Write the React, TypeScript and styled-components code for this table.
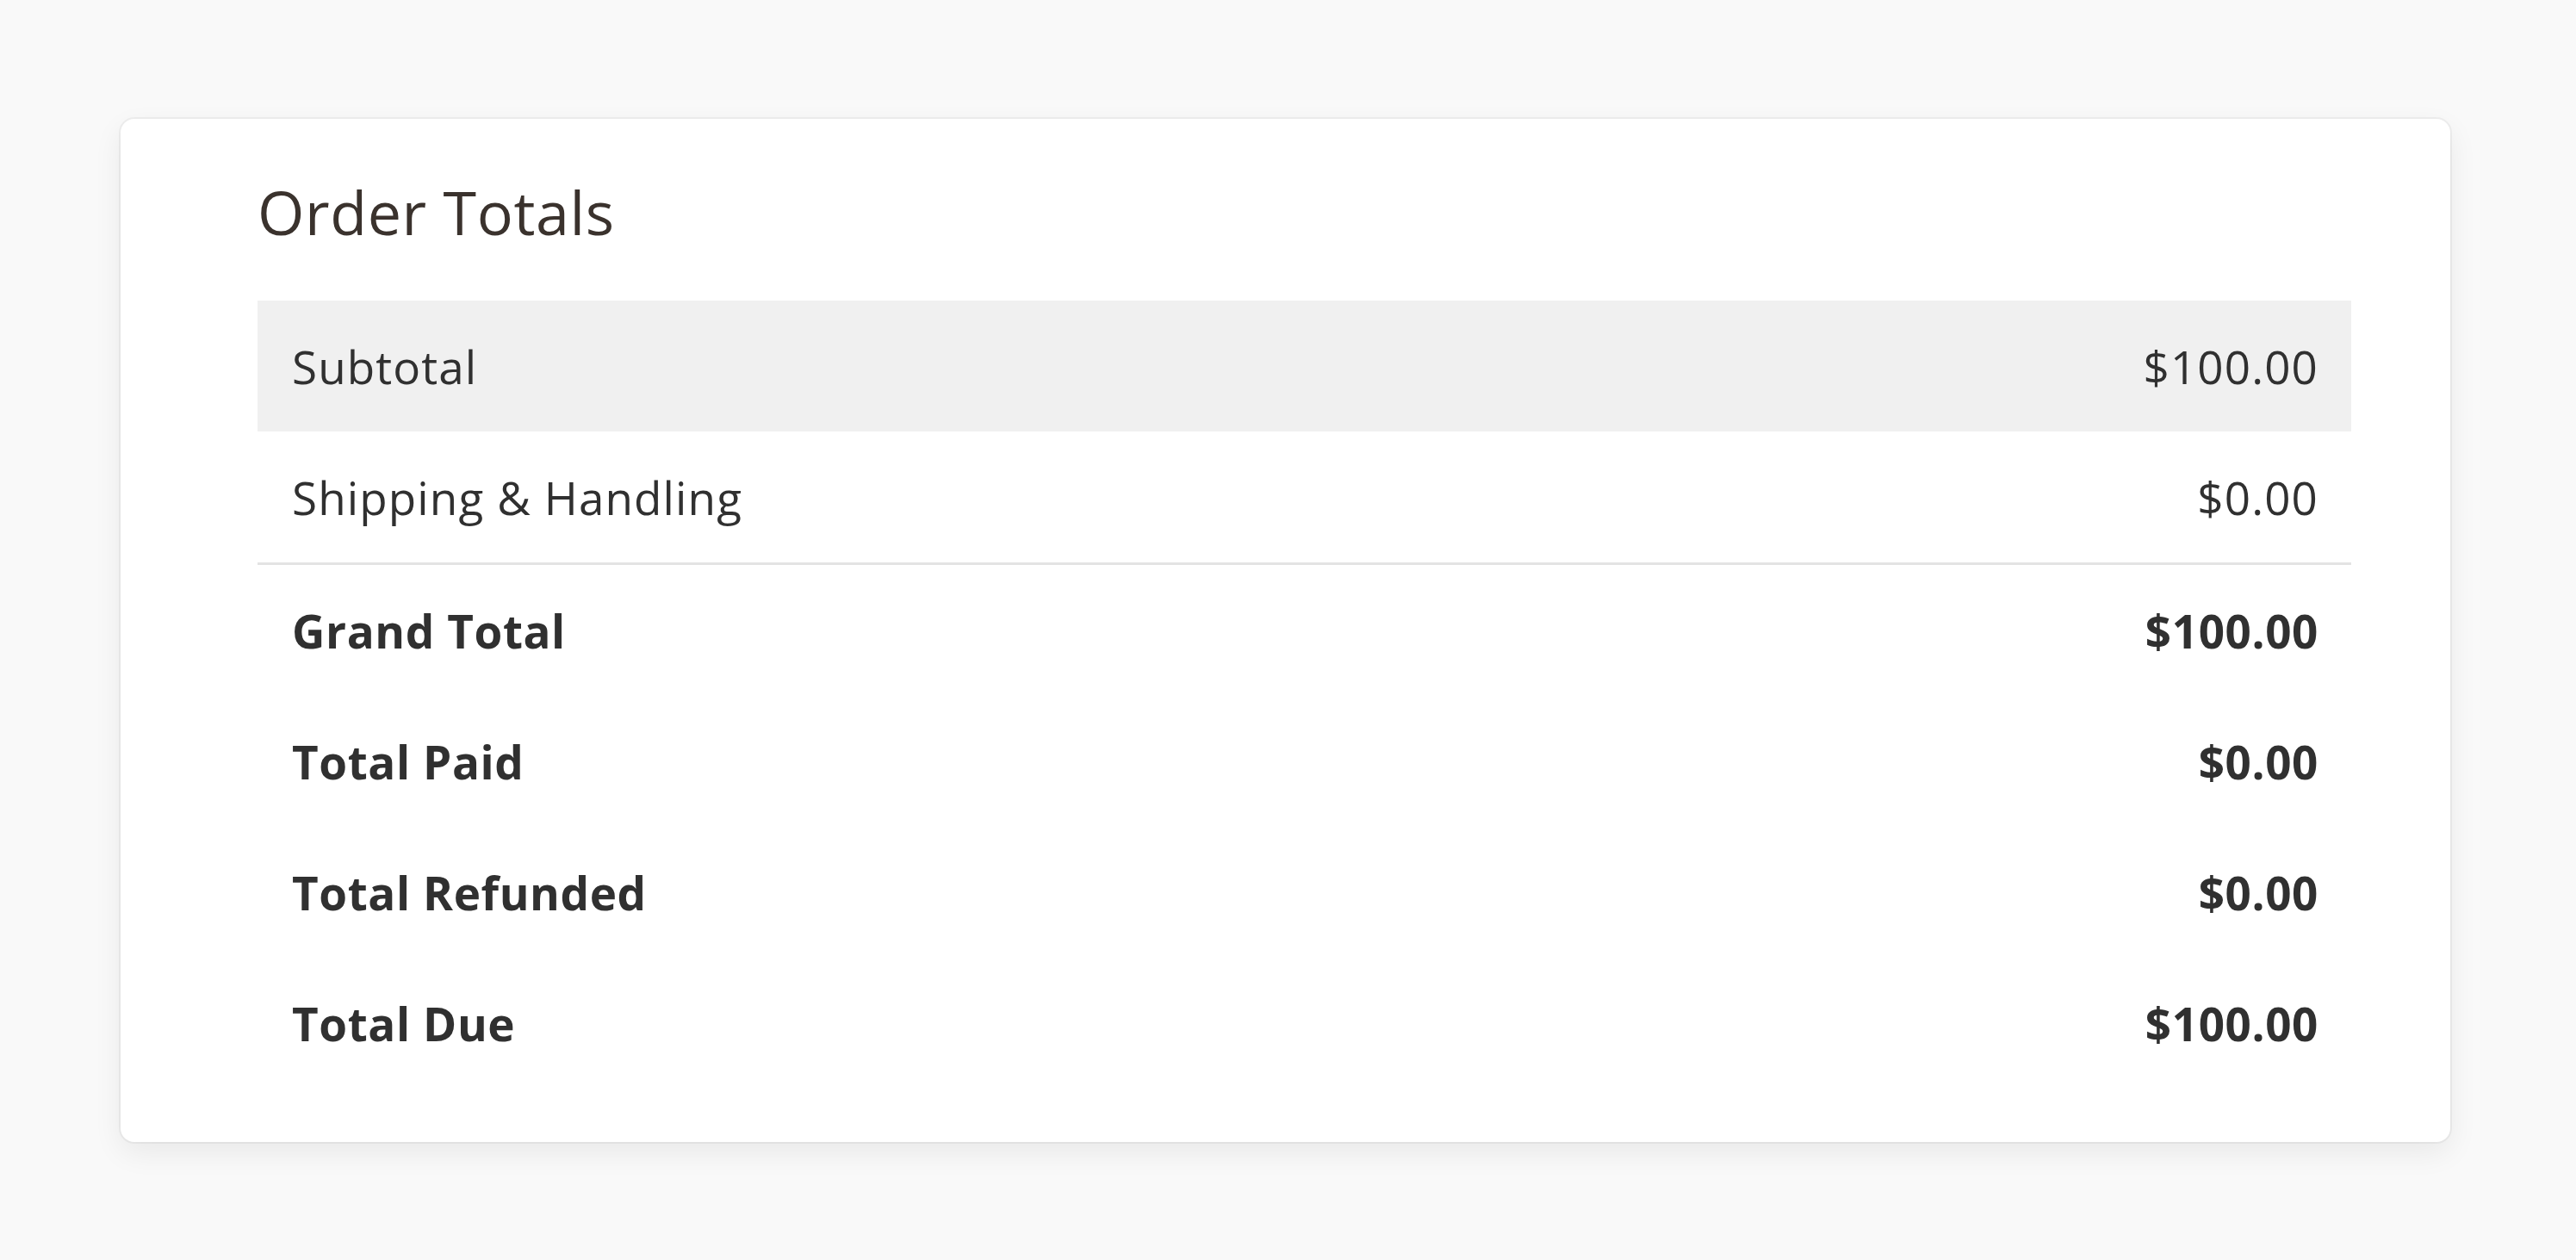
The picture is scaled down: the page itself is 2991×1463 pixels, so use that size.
import React from "react";
import styled, { createGlobalStyle } from "styled-components";

const GlobalStyle = createGlobalStyle`
  html, body {
    margin: 0;
    padding: 0;
    background: #f9f9f9;
  }
  body {
    font-family: "Open Sans", "Liberation Sans", sans-serif;
    color: #303030;
  }
`;

const Page = styled.div`
  min-height: 1463px;
  box-sizing: border-box;
  padding: 138px 146px 0 140px;
`;

const Card = styled.section`
  background: #fff;
  border-radius: 16px;
  padding: 66px 115px 62px 159px;
  box-shadow: 0 0 0 2px rgba(0, 0, 0, 0.045), 0 12px 34px rgba(0, 0, 0, 0.07);
`;

const Title = styled.h2`
  margin: 0 0 61px;
  font-size: 70px;
  line-height: 84px;
  font-weight: 400;
  letter-spacing: 0.6px;
  color: #3a322d;
`;

const Table = styled.div`
  display: flex;
  flex-direction: column;
`;

const Row = styled.div<{ $shaded?: boolean; $bold?: boolean; $divider?: boolean }>`
  display: flex;
  align-items: center;
  justify-content: space-between;
  height: 152px;
  padding: 0 38px 0 40px;
  font-size: 53px;
  font-weight: ${(p) => (p.$bold ? 700 : 400)};
  letter-spacing: ${(p) => (p.$bold ? "0.6px" : "1.1px")};
  color: #303030;
  background: ${(p) => (p.$shaded ? "#f0f0f0" : "transparent")};
  border-bottom: ${(p) => (p.$divider ? "3px solid #e3e3e3" : "none")};
`;

const Label = styled.span``;

const Amount = styled.span`
  text-align: right;
`;

interface Line {
  label: string;
  amount: string;
  shaded?: boolean;
  bold?: boolean;
  divider?: boolean;
}

const lines: Line[] = [
  { label: "Subtotal", amount: "$100.00", shaded: true },
  { label: "Shipping & Handling", amount: "$0.00", divider: true },
  { label: "Grand Total", amount: "$100.00", bold: true },
  { label: "Total Paid", amount: "$0.00", bold: true },
  { label: "Total Refunded", amount: "$0.00", bold: true },
  { label: "Total Due", amount: "$100.00", bold: true },
];

export default function App() {
  return (
    <>
      <GlobalStyle />
      <Page>
        <Card>
          <Title>Order Totals</Title>
          <Table>
            {lines.map((l) => (
              <Row key={l.label} $shaded={l.shaded} $bold={l.bold} $divider={l.divider}>
                <Label>{l.label}</Label>
                <Amount>{l.amount}</Amount>
              </Row>
            ))}
          </Table>
        </Card>
      </Page>
    </>
  );
}
